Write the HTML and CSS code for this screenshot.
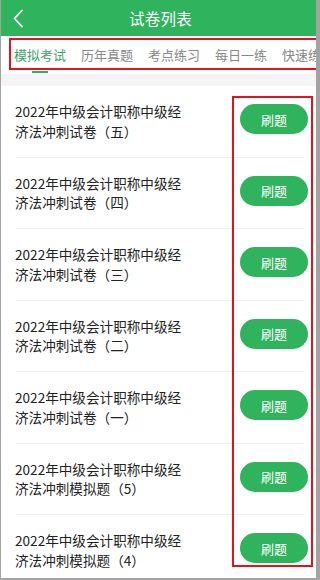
FILE: index.html
```html
<!DOCTYPE html>
<html lang="zh">
<head>
<meta charset="utf-8">
<link rel="stylesheet" href="styles.css">
</head>
<body>
<div class="app">
  <header class="topbar">
    <svg class="back" width="24" height="36" viewBox="0 0 24 36"><polyline points="21,10.5 13.5,18.5 21,26.5" fill="none" stroke="#fff" stroke-width="1.8" stroke-linecap="round" stroke-linejoin="round"/></svg>
    <div class="title">试卷列表</div>
  </header>
  <nav class="tabs">
    <div class="tab active"><span>模拟考试</span><i class="bar"></i></div>
    <div class="tab"><span>历年真题</span><i class="bar"></i></div>
    <div class="tab"><span>考点练习</span><i class="bar"></i></div>
    <div class="tab"><span>每日一练</span><i class="bar"></i></div>
    <div class="tab"><span>快速练习</span><i class="bar"></i></div>
  </nav>
  <div class="band"></div>
  <ul class="list">
    <li class="item"><div class="name">2022年中级会计职称中级经<br>济法冲刺试卷（五）</div><button class="btn">刷题</button></li>
    <li class="item"><div class="name">2022年中级会计职称中级经<br>济法冲刺试卷（四）</div><button class="btn">刷题</button></li>
    <li class="item"><div class="name">2022年中级会计职称中级经<br>济法冲刺试卷（三）</div><button class="btn">刷题</button></li>
    <li class="item"><div class="name">2022年中级会计职称中级经<br>济法冲刺试卷（二）</div><button class="btn">刷题</button></li>
    <li class="item"><div class="name">2022年中级会计职称中级经<br>济法冲刺试卷（一）</div><button class="btn">刷题</button></li>
    <li class="item"><div class="name">2022年中级会计职称中级经<br>济法冲刺模拟题（5）</div><button class="btn">刷题</button></li>
    <li class="item"><div class="name">2022年中级会计职称中级经<br>济法冲刺模拟题（4）</div><button class="btn">刷题</button></li>
  </ul>
  <div class="mark mark-tabs"></div>
  <div class="mark mark-btns"></div>
</div>
</body>
</html>
```

FILE: styles.css
```css
html, body {
  margin: 0;
  padding: 0;
}
body {
  background: #a3a3a3;
  width: 320px;
  height: 580px;
  overflow: hidden;
  font-family: "Noto Sans CJK SC", "Noto Sans", sans-serif;
}
.app {
  position: relative;
  width: 315px;
  height: 578px;
  margin-left: 1px;
  background: #fff;
  overflow: hidden;
}
.topbar {
  height: 36px;
  background: #2fb35c;
  display: flex;
  align-items: center;
}
.back {
  flex: none;
  display: block;
}
.title {
  flex: 1;
  text-align: center;
  color: #fff;
  font-size: 15.5px;
  padding-right: 20px;
  letter-spacing: 0.3px;
}
.tabs {
  height: 38px;
  display: flex;
  gap: 15px;
  padding-left: 13px;
  white-space: nowrap;
  overflow: hidden;
  background: #fff;
}
.tab {
  flex: none;
  display: flex;
  flex-direction: column;
  align-items: center;
  font-size: 13px;
  color: #888;
  padding-top: 9px;
}
.tab span {
  line-height: 20px;
  height: 20px;
}
.tab .bar {
  display: block;
  width: 16px;
  height: 2px;
  margin-top: 6px;
  background: transparent;
}
.tab.active {
  color: #3ea46c;
}
.tab.active .bar {
  background: #34b065;
}
.band {
  height: 12px;
  background: #f5f5f5;
}
.list {
  list-style: none;
  margin: 0;
  padding: 0;
}
.item {
  display: flex;
  align-items: center;
  justify-content: space-between;
  height: 70.5px;
  border-bottom: 1px solid #efefef;
  margin: 0 12px 0 15px;
  padding-left: 0;
  box-sizing: content-box;
}
.name {
  font-size: 13.6px;
  line-height: 19.5px;
  color: #222;
  margin-left: -1px;
  padding-top: 1px;
}
.btn {
  width: 68px;
  height: 30px;
  border: none;
  border-radius: 15px;
  background: #2fb35c;
  color: #fff;
  font-family: inherit;
  font-size: 13px;
  padding: 0;
  margin-right: -4px;
  margin-bottom: 4px;
}
.mark {
  position: absolute;
  border: 2px solid #e3131b;
  box-sizing: border-box;
}
.mark-tabs {
  left: 8px;
  top: 38px;
  width: 310px;
  height: 32px;
}
.mark-btns {
  left: 231px;
  top: 96px;
  width: 81px;
  height: 471px;
}
```
